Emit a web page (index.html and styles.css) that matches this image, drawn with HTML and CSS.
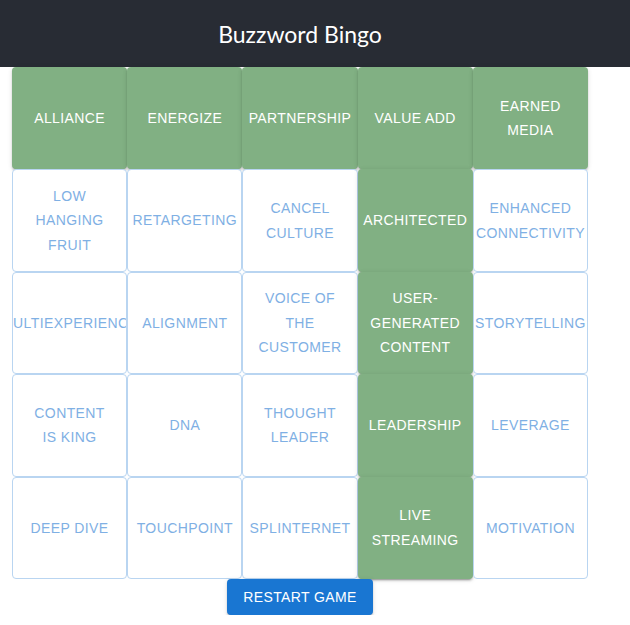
FILE: index.html
```html
<!DOCTYPE html>
<html>
<head>
<meta charset="utf-8">
<link rel="stylesheet" href="styles.css">
</head>
<body>
<header class="app-header"><div class="header-inner"><h1 class="title">Buzzword Bingo</h1></div></header>
<main class="page">
  <div class="board">
    <button class="cell on"><span>Alliance</span></button>
    <button class="cell on"><span>Energize</span></button>
    <button class="cell on"><span>Partnership</span></button>
    <button class="cell on"><span>Value add</span></button>
    <button class="cell on"><span>Earned media</span></button>

    <button class="cell"><span>Low hanging fruit</span></button>
    <button class="cell"><span>Retargeting</span></button>
    <button class="cell"><span>Cancel culture</span></button>
    <button class="cell on"><span>Architected</span></button>
    <button class="cell"><span>Enhanced connectivity</span></button>

    <button class="cell"><span>Multiexperience</span></button>
    <button class="cell"><span>Alignment</span></button>
    <button class="cell"><span>Voice of the customer</span></button>
    <button class="cell on"><span>User-generated content</span></button>
    <button class="cell"><span>Storytelling</span></button>

    <button class="cell"><span>Content is king</span></button>
    <button class="cell"><span>DNA</span></button>
    <button class="cell"><span>Thought leader</span></button>
    <button class="cell on"><span>Leadership</span></button>
    <button class="cell"><span>Leverage</span></button>

    <button class="cell"><span>Deep dive</span></button>
    <button class="cell"><span>Touchpoint</span></button>
    <button class="cell"><span>Splinternet</span></button>
    <button class="cell on"><span>Live streaming</span></button>
    <button class="cell"><span>Motivation</span></button>
  </div>
  <div class="actions"><button class="restart">Restart game</button></div>
</main>
</body>
</html>
```
FILE: styles.css
```css
html, body {
  margin: 0;
  padding: 0;
  background: #fff;
}
.app-header {
  background: #282c34;
  height: 67px;
}
.header-inner {
  width: 600px;
  height: 100%;
  display: flex;
  align-items: center;
  justify-content: center;
}
.title {
  margin: 0;
  color: #fff;
  font-family: Lato, "Open Sans", sans-serif;
  font-weight: 400;
  font-size: 23px;
}
.page {
  width: 576px;
  padding: 0 12px;
}
.board {
  display: grid;
  grid-template-columns: repeat(5, 1fr);
  grid-template-rows: repeat(5, 102.4px);
}
.cell {
  font-family: "Liberation Sans", Arial, sans-serif;
  font-size: 14px;
  font-weight: 400;
  line-height: 1.75;
  letter-spacing: 0.02857em;
  text-transform: uppercase;
  margin: 0;
  padding: 5px 15px;
  border: 1px solid #b9d5f1;
  border-radius: 4px;
  background: #fff;
  color: #7fb0e4;
  display: flex;
  align-items: center;
  justify-content: center;
  text-align: center;
  overflow: hidden;
  cursor: pointer;
  min-width: 0;
}
.cell span {
  display: block;
}
.cell.on {
  background: #81b083;
  color: #fff;
  border-color: transparent;
  padding: 6px 16px;
  box-shadow: 0 3px 1px -2px rgba(0,0,0,0.2), 0 2px 2px 0 rgba(0,0,0,0.14), 0 1px 5px 0 rgba(0,0,0,0.12);
}
.actions {
  display: flex;
  justify-content: center;
}
.restart {
  font-family: "Liberation Sans", Arial, sans-serif;
  font-size: 14px;
  font-weight: 400;
  line-height: 1.75;
  letter-spacing: 0.02857em;
  text-transform: uppercase;
  padding: 6px 16px;
  border: none;
  border-radius: 4px;
  background: #1976d2;
  color: #fff;
  box-shadow: 0 3px 1px -2px rgba(0,0,0,0.2), 0 2px 2px 0 rgba(0,0,0,0.14), 0 1px 5px 0 rgba(0,0,0,0.12);
  cursor: pointer;
}
```
